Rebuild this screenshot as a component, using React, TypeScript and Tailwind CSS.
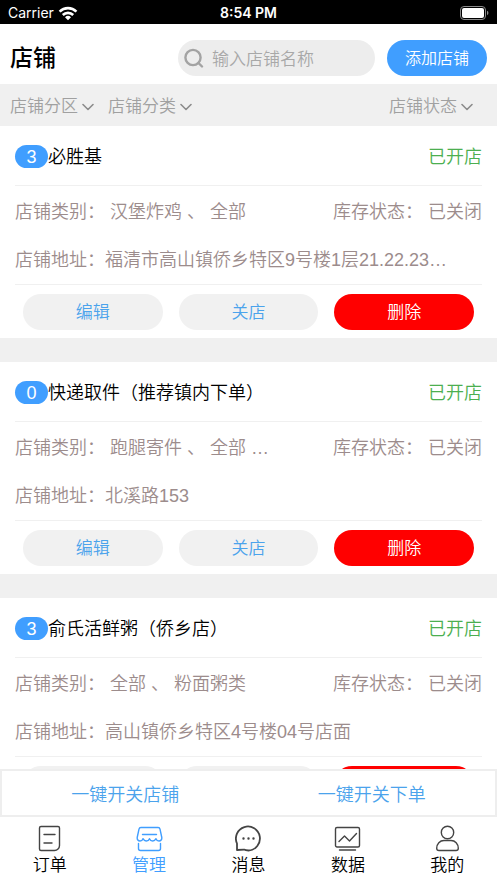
import { useState } from "react";
import type { ReactNode } from "react";

type Shop = {
  id: number;
  count: number;
  name: string;
  categories: string;
  address: string;
};

const shops: Shop[] = [
  { id: 1, count: 3, name: "必胜基", categories: "汉堡炸鸡 、 全部", address: "福清市高山镇侨乡特区9号楼1层21.22.23…" },
  { id: 2, count: 0, name: "快递取件（推荐镇内下单）", categories: "跑腿寄件 、 全部 …", address: "北溪路153" },
  { id: 3, count: 3, name: "俞氏活鲜粥（侨乡店）", categories: "全部 、 粉面粥类", address: "高山镇侨乡特区4号楼04号店面" },
];

function StatusBar() {
  return (
    <div className="grid h-6 shrink-0 grid-cols-3 items-center bg-black px-2 pt-0.5 font-['Inter',sans-serif] text-sm text-white">
      <div className="flex items-center gap-1">
        <span className="font-normal">Carrier</span>
        <svg width="20" height="15" viewBox="0 0 20 15" fill="none" stroke="currentColor" strokeWidth="2.6">
          <path d="M1.600 5.600a12 12 0 0 1 16.800 0" />
          <path d="M4.800 9a7.400 7.400 0 0 1 10.400 0" />
          <path d="M10 14.200 7 11.200a4.300 4.300 0 0 1 6 0z" fill="currentColor" stroke="none" />
        </svg>
      </div>
      <span className="text-center font-semibold">8:54 PM</span>
      <svg className="justify-self-end" width="29" height="14" viewBox="0 0 29 14" fill="none">
        <rect x="0.5" y="0.5" width="25" height="13" rx="3.5" stroke="#8a8a8a" />
        <rect x="2" y="2" width="22" height="10" rx="2" fill="#fff" />
        <path d="M27 4.800v4.400a2.400 2.400 0 0 0 0-4.400z" fill="#8a8a8a" />
      </svg>
    </div>
  );
}

function Filter({ label }: { label: string }) {
  return (
    <button type="button" className="flex items-center gap-1 text-[17px] text-[#a0a0a0]">
      {label}
      <svg width="12" height="8" viewBox="0 0 12 8" fill="none" stroke="#8c8c8c" strokeWidth="1.6" strokeLinecap="round" strokeLinejoin="round">
        <path d="M1 1.500 6 6.500l5-5" />
      </svg>
    </button>
  );
}

function ShopCard({ shop }: { shop: Shop }) {
  return (
    <li className="bg-white px-[15px] pb-2">
      <div className="flex h-15 items-center justify-between border-b border-[#f0f0f0] pt-0.5">
        <div className="flex items-center">
          <span className="flex h-[23px] w-[33px] items-center justify-center rounded-full bg-[#409eff] text-lg text-white">{shop.count}</span>
          <h2 className="text-lg text-black">{shop.name}</h2>
        </div>
        <span className="text-lg text-[#4caf50]">已开店</span>
      </div>
      <div className="border-b border-[#f0f0f0] pt-0.5 text-lg text-[#9c8c8c]">
        <div className="flex h-12 items-center justify-between">
          <p className="flex whitespace-pre">
            <span className="shrink-0">店铺类别： </span>
            <span className="truncate">{shop.categories}</span>
          </p>
          <p className="shrink-0 whitespace-pre">库存状态： 已关闭</p>
        </div>
        <p className="mr-6 flex h-12 items-center">
          <span className="shrink-0">店铺地址：</span>
          <span className="truncate">{shop.address}</span>
        </p>
      </div>
      <div className="flex gap-4 px-2 pt-[9px] text-[17px]">
        <button type="button" className="h-9 flex-1 rounded-full bg-[#f1f1f1] pt-0.5 text-[#4ba3ec]">编辑</button>
        <button type="button" className="h-9 flex-1 rounded-full bg-[#f1f1f1] pt-0.5 text-[#4ba3ec]">关店</button>
        <button type="button" className="h-9 flex-1 rounded-full bg-[#ff0000] pt-0.5 text-white">删除</button>
      </div>
    </li>
  );
}

const tabs: { label: string; icon: ReactNode }[] = [
  {
    label: "订单",
    icon: (
      <>
        <path d="M5 1.500h17a1.500 1.500 0 0 1 1.500 1.500v17.500a5 5 0 0 1-5 5H5A1.500 1.500 0 0 1 3.500 24V3A1.500 1.500 0 0 1 5 1.500z" />
        <path d="M8 9.500h11M8 18h8" />
      </>
    ),
  },
  {
    label: "管理",
    icon: (
      <>
        <path d="M5 2.500h17a2 2 0 0 1 2 1.600l1.800 8.400c.3 2-1 3.500-2.800 3.500-1.600 0-2.600-1.200-3-2.300-.7 1.300-1.700 2.300-3.200 2.300-1.600 0-2.800-1-3.300-2.300-.5 1.300-1.700 2.300-3.300 2.300-1.500 0-2.500-1-3.200-2.300-.4 1.100-1.400 2.300-3 2.300-1.800 0-3.100-1.500-2.800-3.500L3 4.100A2 2 0 0 1 5 2.500z" />
        <path d="M6.500 9.500h14M2.500 18.500v5a2 2 0 0 0 2 2h18a2 2 0 0 0 2-2v-5" />
      </>
    ),
  },
  {
    label: "消息",
    icon: (
      <>
        <path d="M2 25v-6.500A12 12 0 1 1 13.500 25.500c-2 0-3.500-.3-4.500-.900z" strokeWidth="1.8" />
        <path d="M8.500 13.500h.01M13.500 13.500h.01M18.500 13.500h.01" strokeWidth="2.4" />
      </>
    ),
  },
  {
    label: "数据",
    icon: (
      <>
        <rect x="1.500" y="2.500" width="24" height="19.500" rx="1.500" />
        <path d="m5 16.500 5.500-5.500 5 5 7-7.500M5.500 25h16" />
      </>
    ),
  },
  {
    label: "我的",
    icon: (
      <>
        <circle cx="13.500" cy="7.500" r="6.200" />
        <path d="M5 25.500c-1.500 0-2.300-.8-2.300-2.200 0-4.600 3.200-7.800 7.300-7.800h7c4.100 0 7.300 3.200 7.300 7.800 0 1.400-.8 2.200-2.300 2.200z" />
      </>
    ),
  },
];

export default function App() {
  const [keyword, setKeyword] = useState("");
  const [active, setActive] = useState("管理");

  return (
    <div className="flex h-screen flex-col bg-white font-['Liberation_Sans','Noto_Sans_CJK_SC',sans-serif] font-[350]">
      <StatusBar />
      <header className="flex h-15 shrink-0 items-center px-[10px] pt-2">
        <h1 className="text-[23px] font-medium text-black">店铺</h1>
        <label className="ml-auto flex h-9 w-[197px] items-center gap-2 rounded-full bg-[#ededed] px-[6px]">
          <svg className="shrink-0" width="20" height="20" viewBox="0 0 20 20" fill="none" stroke="#a3a3a3" strokeWidth="2.4" strokeLinecap="round">
            <circle cx="9" cy="9.500" r="7.600" />
            <path d="m14.500 15 3.500 3.500" />
          </svg>
          <input
            className="w-full min-w-0 bg-transparent pt-1 text-[17px] text-black outline-none placeholder:text-[#a8a8a8]"
            placeholder="输入店铺名称"
            aria-label="输入店铺名称"
            value={keyword}
            onChange={(e) => setKeyword(e.target.value)}
          />
        </label>
        <button type="button" className="ml-3 h-9 w-25 rounded-full bg-[#409eff] pt-0.5 text-base text-white">添加店铺</button>
      </header>
      <div className="flex h-[42px] shrink-0 items-center gap-3.5 bg-[#f0f0f0] px-[10px] pt-1">
        <Filter label="店铺分区" />
        <Filter label="店铺分类" />
        <div className="ml-auto pr-3.5">
          <Filter label="店铺状态" />
        </div>
      </div>
      <ul className="flex min-h-0 flex-1 flex-col gap-6 overflow-hidden bg-[#f0f0f0]">
        {shops.map((shop) => (
          <ShopCard key={shop.id} shop={shop} />
        ))}
      </ul>
      <div className="grid h-12 shrink-0 grid-cols-2 border-2 border-[#eeeeee] bg-white text-lg text-[#4ba3ec]">
        <button type="button" className="pt-1">一键开关店铺</button>
        <button type="button" className="pt-1">一键开关下单</button>
      </div>
      <nav className="grid h-[66px] shrink-0 grid-cols-5 bg-white">
        {tabs.map((tab) => (
          <button
            key={tab.label}
            type="button"
            onClick={() => setActive(tab.label)}
            className={`flex flex-col items-center pt-2 text-[17px] leading-7 ${active === tab.label ? "text-[#409eff]" : "text-black"}`}
          >
            <svg
              width="27"
              height="27"
              viewBox="0 0 27 27"
              fill="none"
              stroke={active === tab.label ? "#409eff" : "#444"}
              strokeWidth="1.4"
              strokeLinecap="round"
              strokeLinejoin="round"
            >
              {tab.icon}
            </svg>
            <span>{tab.label}</span>
          </button>
        ))}
      </nav>
    </div>
  );
}
